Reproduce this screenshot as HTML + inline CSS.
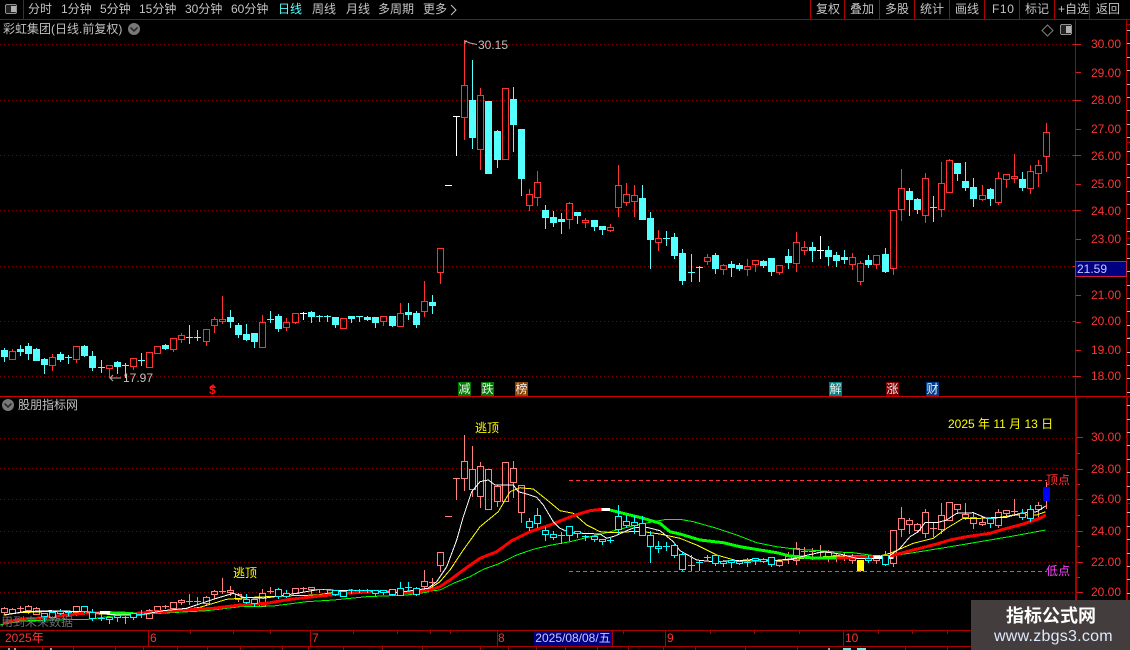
<!DOCTYPE html>
<html><head><meta charset="utf-8"><style>
html,body{margin:0;padding:0;background:#000;width:1130px;height:650px;overflow:hidden}
#r{position:relative;width:1130px;height:650px;overflow:hidden;background:#000;font:12px/14px "Liberation Sans","WenQuanYi Zen Hei","Noto Sans CJK SC",sans-serif;color:#c0c0c0}
#r span{position:absolute;white-space:pre;line-height:14px}
svg{position:absolute;left:0;top:0}
.n{top:2px;color:#c4c4c4}
.p{left:1091px;color:#ff3232}
.s{width:13px;height:14px;top:382px;color:#eee;text-align:center}
.y{color:#ffff00}
.a{top:631px;color:#ff3232}
</style></head><body><div id="r">
<svg id="v" width="1130" height="650" viewBox="0 0 1130 650" shape-rendering="crispEdges"></svg>
<span class="n" style="left:28px">分时</span><span class="n" style="left:61px">1分钟</span><span class="n" style="left:100px">5分钟</span><span class="n" style="left:139px">15分钟</span><span class="n" style="left:185px">30分钟</span><span class="n" style="left:231px">60分钟</span><span class="n" style="left:278px;color:#54ffff">日线</span><span class="n" style="left:312px">周线</span><span class="n" style="left:346px">月线</span><span class="n" style="left:378px">多周期</span><span class="n" style="left:423px">更多</span>
<span class="n" style="left:816px">复权</span><span class="n" style="left:850px">叠加</span><span class="n" style="left:885px">多股</span><span class="n" style="left:920px">统计</span><span class="n" style="left:955px">画线</span><span class="n" style="left:992px;letter-spacing:.6px">F10</span><span class="n" style="left:1025px">标记</span><span class="n" style="left:1058px">+自选</span><span class="n" style="left:1096px">返回</span>
<span style="left:3px;top:22px">彩虹集团(日线.前复权)</span>
<span style="left:18px;top:398px">股朋指标网</span>
<span style="left:478px;top:38px">30.15</span>
<span style="left:123px;top:371px">17.97</span>
<span class="p" style="top:37px">30.00</span><span class="p" style="top:66px">29.00</span><span class="p" style="top:93px">28.00</span><span class="p" style="top:122px">27.00</span><span class="p" style="top:149px">26.00</span><span class="p" style="top:177px">25.00</span><span class="p" style="top:204px">24.00</span><span class="p" style="top:232px">23.00</span><span class="p" style="top:288px">21.00</span><span class="p" style="top:314px">20.00</span><span class="p" style="top:343px">19.00</span><span class="p" style="top:369px">18.00</span>
<span class="p" style="top:430px">30.00</span><span class="p" style="top:462px">28.00</span><span class="p" style="top:492px">26.00</span><span class="p" style="top:524px">24.00</span><span class="p" style="top:555px">22.00</span><span class="p" style="top:585px">20.00</span>
<span style="left:1077px;top:262px;color:#c8c8ff">21.59</span>
<span style="left:209px;top:383px;color:#ff1010;font-weight:bold">$</span>
<span class="s" style="left:458px;background:#007a00">减</span><span class="s" style="left:481px;background:#007a00">跌</span><span class="s" style="left:515px;background:#8a4300">榜</span><span class="s" style="left:829px;background:#008080">解</span><span class="s" style="left:886px;background:#800000">涨</span><span class="s" style="left:926px;background:#003c8c">财</span>
<span class="y" style="left:475px;top:421px">逃顶</span><span class="y" style="left:233px;top:566px">逃顶</span>
<span class="y" style="left:948px;top:417px">2025 年 11 月 13 日</span>
<span style="left:1046px;top:473px;color:#ff3232">顶点</span><span style="left:1046px;top:564px;color:#ff40ff">低点</span>
<span style="left:1px;top:615px;color:#6e6e6e">用到未来数据</span>
<span class="a" style="left:5px">2025年</span><span class="a" style="left:150px">6</span><span class="a" style="left:312px">7</span><span class="a" style="left:498px">8</span><span class="a" style="left:667px">9</span><span class="a" style="left:845px">10</span>
<span style="left:534px;top:631px;width:78px;height:15px;background:#000080;color:#c8c8ff;text-align:center">2025/08/08/五</span>
<span style="left:971px;top:600px;width:159px;height:50px;background:#433d3d"></span>
<span style="left:1006px;top:606px;color:#fff;font-size:18px;font-weight:bold;line-height:20px">指标公式网</span>
<span style="left:994px;top:628px;color:#dfe8ff;font-size:16px;line-height:18px;letter-spacing:.25px">www.zbgs3.com</span>
</div>
<script>
var s='',AX='#aa0000',GR='#880000';
function l(x1,y1,x2,y2,c,w,extra){s+='<line x1="'+x1+'" y1="'+y1+'" x2="'+x2+'" y2="'+y2+'" stroke="'+c+'" stroke-width="'+(w||1)+'" '+(extra||'')+'/>'}
function R(x,y,w,h,f,st){s+='<rect x="'+x+'" y="'+y+'" width="'+w+'" height="'+h+'" fill="'+f+'"'+(st?' stroke="'+st+'"':'')+'/>'}
// grids
[44,100,155,210,266,321,376,438,468,499,531,562,592].forEach(function(y){l(0,y+.5,1075,y+.5,GR,1,'stroke-dasharray="1 3"')});
// frame
l(0,19.5,1130,19.5,AX);l(23.5,0,23.5,19,AX);
[810,844,879,914,949,984,1019,1054,1089].forEach(function(x){l(x+.5,0,x+.5,19,AX)});
l(1075.5,19,1075.5,396,AX);l(1126.5,19,1126.5,396,AX);
l(1076,397,1076,630,AX,2);l(1127,397,1127,650,AX,2);
l(0,396.5,1130,396.5,'#cc0000');
l(0,630.5,971,630.5,AX);l(0,646.5,971,646.5,AX);
// time ticks
[148,310,497,534,612,665,843].forEach(function(x){l(x+.5,631,x+.5,646,AX)});
[190,233,270,353,397,430,450,623,710,754,799,878,912,947].forEach(function(x){l(x+.5,631,x+.5,634,AX)});
[42,73,115,143,177,207,240,282,308,343,382,422,480,508,536,565,597,628,663,695,745,797,860,905,947].forEach(function(x){l(x+.5,647,x+.5,650,AX)});
// axis ticks
[44,72,100,129,155,184,210,239,267,295,322,350,376].forEach(function(y){l(1076,y+.5,1081,y+.5,'#cc2020')});
[44,100,155,210,266,321,376].forEach(function(y){l(1073,y+.5,1076,y+.5,'#cc2020')});
[437,469,499,531,562,592].forEach(function(y){l(1077,y+.5,1083,y+.5,'#cc2020')});
[453,484,515,546,577].forEach(function(y){l(1077,y+.5,1080,y+.5,'#cc2020')});
for(var y=30;y<650;y+=13.4){l(1127,Math.round(y)+.5,1130,Math.round(y)+.5,'#bbbbbb')}
[24,142,238,337,396,503].forEach(function(y){l(1126,y+.5,1130,y+.5,AX)});
// price box
R(1075.5,261.5,51,15,'#000080','#cc2040');
// candles
var Z=[];
function add(ox,oy,a){a.forEach(function(d){Z.push([ox+d[0]/3,oy+d[1]/3,oy+d[2]/3,oy+d[3]/3,oy+d[4]/3,d[5]])})}
add(0,280,[[13,204,210,228,243,'c'],[37,208,214,236,236,'r'],[61,195,208,214,224,'c'],[85,190,198,218,237,'c'],[109,205,208,240,240,'c'],[133,233,237,252,279,'c'],[157,222,232,254,270,'r'],[181,215,222,237,243,'c'],[205,226,230,232,248,'c'],[229,198,198,236,246,'r'],[253,195,198,225,228,'c'],[277,213,228,260,270,'c'],[304,240,261,265,275,'c'],[328,255,256,265,290,'r'],[352,242,246,258,278,'c'],[376,250,254,257,290,'c'],[400,235,235,257,267,'r'],[424,220,240,242,255,'c'],[448,216,217,262,262,'r'],[472,198,198,220,220,'r'],[496,192,195,204,208,'c'],[520,175,175,206,212,'r'],[544,160,166,176,186,'r'],[568,135,172,174,188,'c'],[592,150,172,175,180,'c'],[619,146,148,182,194,'r'],[643,112,118,134,156,'r'],[667,48,116,122,129,'r'],[691,90,111,123,140,'c'],[715,130,134,162,171,'c'],[739,132,162,177,180,'c'],[763,160,160,183,200,'c'],[787,105,127,200,200,'r'],[811,93,118,120,126,'c'],[835,102,108,144,152,'c'],[859,114,126,142,149,'r'],[886,100,100,127,130,'r'],[910,96,100,102,118,'w'],[934,94,96,107,126,'c'],[958,104,108,110,123,'c'],[982,104,108,110,122,'c'],[1006,110,112,131,140,'c'],[1030,115,115,143,143,'r'],[1054,108,109,113,126,'c'],[1078,108,109,111,123,'c'],[1102,108,111,116,121,'c'],[1126,111,111,126,141,'c'],[1150,109,109,122,135,'r'],[1177,108,108,135,138,'c'],[1201,69,100,137,137,'r'],[1225,69,97,102,118,'c'],[1249,93,100,132,141,'c'],[1273,3,64,92,108,'r'],[1297,45,67,75,99,'c']]);
add(440,30,[[1,655,655,727,760,'r'],[24,466,466,466,466,'w'],[49,259,259,259,375,'w'],[73,30,166,260,326,'r'],[97,90,210,320,354,'c'],[121,175,196,358,417,'r'],[145,213,213,428,428,'c'],[172,300,303,386,411,'c'],[196,175,175,386,386,'r'],[220,171,207,281,363,'c'],[244,297,297,443,495,'c'],[268,477,493,524,541,'r'],[292,423,457,500,525,'r'],[316,525,541,560,594,'c'],[340,543,561,575,588,'c'],[364,549,567,572,609,'c'],[388,516,520,566,594,'r'],[412,546,546,554,579,'c'],[436,564,571,575,591,'r'],[463,570,570,587,600,'c'],[487,588,588,596,612,'c'],[511,583,592,601,603,'r'],[535,405,466,532,557,'r'],[559,459,493,515,525,'r'],[583,465,496,512,557,'r'],[607,465,504,566,566,'c'],[631,546,565,626,713,'c'],[655,600,625,637,660,'r'],[679,603,624,626,645,'c'],[703,609,621,675,684,'c']]);
add(670,130,[[37,357,369,449,461,'c'],[64,372,426,428,453,'c'],[88,408,410,412,453,'c'],[112,372,382,392,402,'r'],[136,370,375,414,429,'c'],[160,402,406,416,432,'r'],[184,393,402,411,438,'c'],[208,399,405,414,420,'c'],[232,387,409,416,435,'r'],[256,391,391,401,423,'r'],[280,390,393,405,411,'c'],[304,384,384,423,435,'c'],[328,406,406,425,431,'r'],[355,357,378,396,414,'c'],[379,306,337,398,423,'r'],[403,333,352,359,372,'r'],[427,336,351,360,393,'c'],[451,318,360,362,384,'w'],[475,348,360,378,405,'c'],[499,366,375,390,408,'c'],[523,360,381,387,399,'c'],[547,369,382,402,417,'r'],[571,394,400,452,462,'r'],[595,375,390,402,411,'c'],[619,376,376,402,414,'r'],[646,354,372,423,426,'c'],[670,241,241,415,432,'r'],[694,117,175,236,270,'r']]);
add(880,110,[[88,235,243,267,315,'c'],[112,264,267,297,309,'c'],[136,189,205,314,336,'r'],[160,258,291,293,333,'c'],[184,156,220,296,318,'r'],[208,148,151,245,245,'r'],[232,159,159,189,210,'c'],[256,156,213,231,240,'c'],[280,204,231,264,288,'c'],[307,225,256,266,270,'r'],[331,234,237,264,285,'c'],[355,186,205,275,282,'r'],[379,193,193,206,231,'r'],[403,132,199,203,216,'r'],[427,186,207,231,240,'c'],[451,165,184,233,249,'r'],[475,150,166,188,228,'r'],[499,39,67,137,183,'r']]);
var CY=[[44,69],[84,142],[246,255],[278,287],[319,418],[529,772],[868,870],[885,886],[990,991],[1022,1031]];
function isCy(x){return CY.some(function(r){return x>=r[0]&&x<=r[1]})}
function upper(){Z.forEach(function(d){
 var cx=Math.floor(d[0]),h=Math.round(d[1]),t=Math.round(d[2]),b=Math.round(d[3]),o=Math.round(d[4]),k=d[5];
 var c=k=='c'?'#54ffff':k=='w'?'#ffffff':'#ff3232';
 if(k=='w'||(b-t<=1&&k!='r')){if(h<o)l(cx+.5,h,cx+.5,o+1,c);R(cx-3,t,7,Math.max(1,b-t),c);return}
 if(b-t<1){if(h<o)l(cx+.5,h,cx+.5,o+1,c);R(cx-3,t,7,1,c);return}
 l(cx+.5,h,cx+.5,t,c);l(cx+.5,b,cx+.5,o+1,c);
 if(k=='c')R(cx-3,t,7,b-t+1,c);else R(cx-2.5,t+.5,6,b-t,'none',c);
})}
function lower(phase){var f=function(y){return Math.round(437.6+(y-44.3)*.5585)};Z.forEach(function(d){
 var cx=Math.floor(d[0]),h=f(d[1]),t=f(d[2]),b=f(d[3]),o=f(d[4]);
 var special=cx==860||cx==1046,cy=isCy(cx);
 if(phase==1&&(cy||special))return;
 if(phase==2&&!(cy||special))return;
 var c=cy?'#00ffff':'#ff8080';
 if(cx==860){R(cx-3,t,7,b-t+1,'#ffff00');l(cx+.5,b,cx+.5,o+1,c);return}
 if(cx==1046){l(cx+.5,h,cx+.5,o+1,c);R(cx-3,t,7,b-t+1,'#0000ff');return}
 if(b-t<2){if(h<o)l(cx+.5,h,cx+.5,o+1,c);R(cx-3,t,7,Math.max(1,b-t),c);return}
 l(cx+.5,h,cx+.5,t,c);l(cx+.5,b,cx+.5,o+1,c);
 R(cx-2.5,t+.5,6,b-t,cy?'#000':'none',c);
})}
upper();
lower(1);
// indicator lines
function pts(ox,oy,a){var o=[];for(var i=0;i<a.length;i+=2)o.push((ox+a[i]/3).toFixed(1)+','+(oy+a[i+1]/3).toFixed(1));return o.join(' ')}
function pl(p,c,w){s+='<polyline fill="none" stroke="'+c+'" stroke-width="'+w+'" points="'+p+'"/>'}
pl([pts(0,540,[0,255,60,243,150,240,265,238,290,235,350,226,480,220,620,212,720,200,820,198,920,185,1000,180,1100,170,1220,165,1285,156]),pts(430,410,[0,543,30,540,70,520,120,500,160,478,205,462,260,435,310,418,360,406,420,395,490,378,530,368,580,355,620,345,670,335,710,328]),pts(680,490,[0,88,40,95,110,115,170,135,230,158,290,170,350,178,420,182,470,186,520,188,590,198]),pts(880,400,[30,468,100,458,200,442,300,425,400,408,497,390])].join(' '),'#00ff00',1);
pl([pts(0,540,[10,225,60,218,130,215,220,215,300,222,380,225,420,218,520,215,600,202,680,178,760,172,850,168,950,165,1050,150,1110,155,1200,155,1280,150]),pts(430,410,[0,535,30,515,60,480,100,420,150,350,205,305,240,245,270,233,310,237,345,265,390,302,430,310,470,345,510,365,550,368,600,365,640,365,690,372]),pts(680,490,[0,145,50,165,110,195,170,212,220,213,290,212,340,208,400,202,470,198,540,198,600,198]),pts(880,400,[30,460,100,430,160,415,200,385,250,355,300,355,360,352,400,345,470,345,497,335])].join(' '),'#ffff00',1);
pl(pts(0,540,[10,250,60,237,110,235,170,228,250,220,300,218]),'#ff0000',3);
pl(pts(0,540,[300,218,330,218]),'#ffffff',3);
pl(pts(0,540,[330,218,380,220,410,222]),'#00ff00',3);
pl([pts(0,540,[410,220,480,215,560,210,640,205,720,195,800,190,870,178,960,168,1040,160,1110,155,1180,155,1240,158,1285,150]),pts(430,410,[0,540,30,530,60,510,100,480,150,445,200,425,245,392,300,365,360,345,430,317,480,302,515,298])].join(' '),'#ff0000',3);
pl(pts(430,410,[515,298,540,298]),'#ffffff',3);
pl([pts(430,410,[540,300,600,315,640,325,690,340,720,365]),pts(680,490,[0,132,60,150,130,158,180,170,240,180,290,188,330,198,400,204,470,204])].join(' '),'#00ff00',3);
pl(pts(680,490,[470,204,500,203,540,203,580,200]),'#ff0000',3);
pl(pts(680,490,[580,202,640,202]),'#ffffff',3);
pl(pts(880,400,[30,468,100,450,170,432,210,420,260,410,330,400,370,388,430,372,480,355,497,345]),'#ff0000',3);
pl([pts(0,540,[15,225,70,215,150,212,260,215,300,220,350,225,420,225,490,212,560,205,640,178,700,160,730,172,790,175,860,165,960,148,1020,152,1110,152,1190,158,1285,145]),pts(430,410,[0,530,20,515,50,470,80,390,100,320,125,245,150,215,175,210,195,225,250,225,265,245,290,252,320,262,340,285,370,335,390,355,420,368,460,370,510,372,530,385,555,378,590,362,615,352,650,352,690,362,730,395]),pts(680,490,[0,182,50,210,100,215,170,212,230,208,280,212,340,206,380,196,430,185,480,192,530,205,600,205]),pts(880,400,[25,470,60,445,90,410,115,395,135,368,170,368,200,360,230,340,280,338,320,355,380,352,420,340,470,335,497,318])].join(' '),'#ffffff',1);
lower(2);
// dashed
l(569,480.5,1047,480.5,'#ff3232',1,'stroke-dasharray="4 3"');
l(569,571.5,1047,571.5,'#ff20ff',1,'stroke-dasharray="4 3"');
// top-left and right icons
s+='<rect x="5.5" y="4.5" width="11" height="9" rx="1.5" fill="#222" stroke="#909090"/><rect x="11" y="6" width="5" height="6" fill="#b0b0b0"/>';
s+='<rect x="1060.5" y="24.5" width="11" height="10" rx="1.5" fill="#222" stroke="#909090"/><rect x="1066" y="26" width="5" height="7" fill="#b0b0b0"/>';
s+='<g shape-rendering="auto"><path d="M1047.5 25 L1053 30.5 L1047.5 36 L1042 30.5Z" fill="none" stroke="#808080"/>';
s+='<path d="M451 5 L456 10 L451 15" fill="none" stroke="#c4c4c4"/>';
s+='<circle cx="134" cy="29" r="6" fill="#787878"/><path d="M130.5 27.5 L134 31 L137.5 27.5" fill="none" stroke="#222" stroke-width="1.5"/>';
s+='<circle cx="8" cy="405" r="6" fill="#787878"/><path d="M4.5 403.5 L8 407 L11.5 403.5" fill="none" stroke="#222" stroke-width="1.5"/>';
// annotation arrows
s+='<path d="M465 44 V41 H467 M465 41 L470 43 L477 44.5" fill="none" stroke="#b0b0b0"/>';
s+='<path d="M121 378 H110 M113 375 L110 378 L113 381" fill="none" stroke="#b0b0b0"/>';
s+='<path d="M213 384 L216 388 H210Z" fill="#ff1010"/></g>';
// bottom glimpses
R(8,648,2,2,'#999');R(14,648,2,2,'#999');R(50,648,2,2,'#999');R(828,648,2,2,'#999');R(843,648,8,2,'#6ee');R(857,648,9,2,'#6ee');
document.getElementById('v').innerHTML=s;
</script>
</body></html>
